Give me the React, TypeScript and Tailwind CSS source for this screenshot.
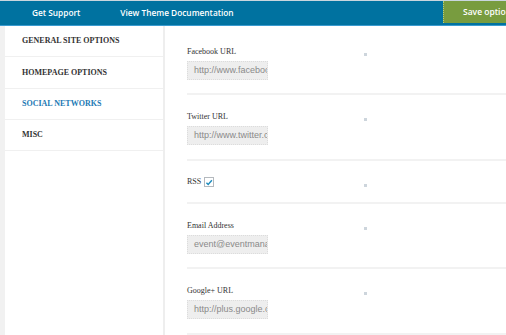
import React from 'react';

const menu = [
  { label: 'GENERAL SITE OPTIONS', active: false },
  { label: 'HOMEPAGE OPTIONS', active: false },
  { label: 'SOCIAL NETWORKS', active: true },
  { label: 'MISC', active: false },
];

const InfoIcon: React.FC<{ className?: string }> = ({ className = '' }) => (
  <span className={`block w-[3px] h-[3px] bg-[#cdd5dc] ${className}`}></span>
);

const TextField: React.FC<{ label: string; value: string; pad: string }> = ({ label, value, pad }) => (
  <div className={`flex border-b-2 border-[#f2f2f2] ${pad}`}>
    <div className="w-[177px] flex flex-col">
      <span className="h-[10px] leading-[10px] text-[8px] text-[#333]">{label}</span>
      <div className="mt-[4px] w-[81px] h-[19px] bg-[#eeeeee] border border-dotted border-[#dcdcdc] flex items-center pl-[6px] overflow-hidden">
        <span className="whitespace-nowrap text-[9px] text-[#8a8a8a] font-['Liberation_Sans',Arial,sans-serif]">{value}</span>
      </div>
    </div>
    <InfoIcon className="mt-[6px]" />
  </div>
);

export default function App() {
  return (
    <div className="w-[506px] h-[335px] overflow-hidden bg-white flex flex-col font-['Liberation_Serif','Times_New_Roman',serif]">
      {/* Top bar */}
      <div className="h-[26px] shrink-0 bg-[#0072a0] border-t border-[#c9d6de] border-b border-b-[#3a9bd0] flex items-stretch">
        <nav className="flex items-center gap-[40px] pl-[32px] text-white text-[8.3px] font-semibold font-['Open_Sans',sans-serif]">
          <span>Get Support</span>
          <span>View Theme Documentation</span>
        </nav>
        <div className="ml-auto w-[63px] mb-[2px] bg-[#789c3f] border-l border-dotted border-[#b4cc7e] flex items-center pl-[19px] overflow-hidden">
          <span className="whitespace-nowrap text-white text-[8.5px] font-semibold font-['Open_Sans',sans-serif]">Save options</span>
        </div>
      </div>

      <div className="flex flex-1 min-h-0">
        <div className="w-[5px] bg-[#f1f1f1]"></div>

        {/* Sidebar */}
        <aside className="w-[160px] border-r-2 border-[#eeeeee] flex flex-col">
          {menu.map((m, i) => (
            <div
              key={m.label}
              className={`${i === 1 ? 'h-[32px]' : 'h-[31px]'} border-b border-[#f0f0f0] flex items-center pl-[17px] text-[8px] font-bold ${m.active ? 'text-[#2279b4]' : 'text-[#333]'}`}
            >
              {m.label}
            </div>
          ))}
        </aside>

        {/* Content */}
        <main className="flex-1 pl-[22px] flex flex-col">
          <TextField label="Facebook URL" value="http://www.facebook.com/" pad="pt-[21px] pb-[13px]" />
          <TextField label="Twitter URL" value="http://www.twitter.com/" pad="pt-[17px] pb-[14px]" />

          <div className="flex border-b-2 border-[#f2f2f2] pt-[16px] pb-[15px]">
            <div className="w-[177px] flex items-center gap-[3px] h-[10px]">
              <span className="text-[8px] text-[#333] leading-[10px]">RSS</span>
              <span className="w-[10px] h-[10px] border border-[#b4b9be] bg-white flex items-center justify-center">
                <svg viewBox="0 0 10 10" className="w-[9px] h-[9px]">
                  <path d="M1.8 5.2 L4 7.4 L8.6 2.2" fill="none" stroke="#1e8cbe" strokeWidth="1.8" />
                </svg>
              </span>
            </div>
            <InfoIcon className="mt-[7px]" />
          </div>

          <TextField label="Email Address" value="event@eventmanager.com" pad="pt-[17px] pb-[13px]" />
          <TextField label="Google+ URL" value="http://plus.google.com/" pad="pt-[17px] pb-[14px]" />
        </main>
      </div>
    </div>
  );
}
